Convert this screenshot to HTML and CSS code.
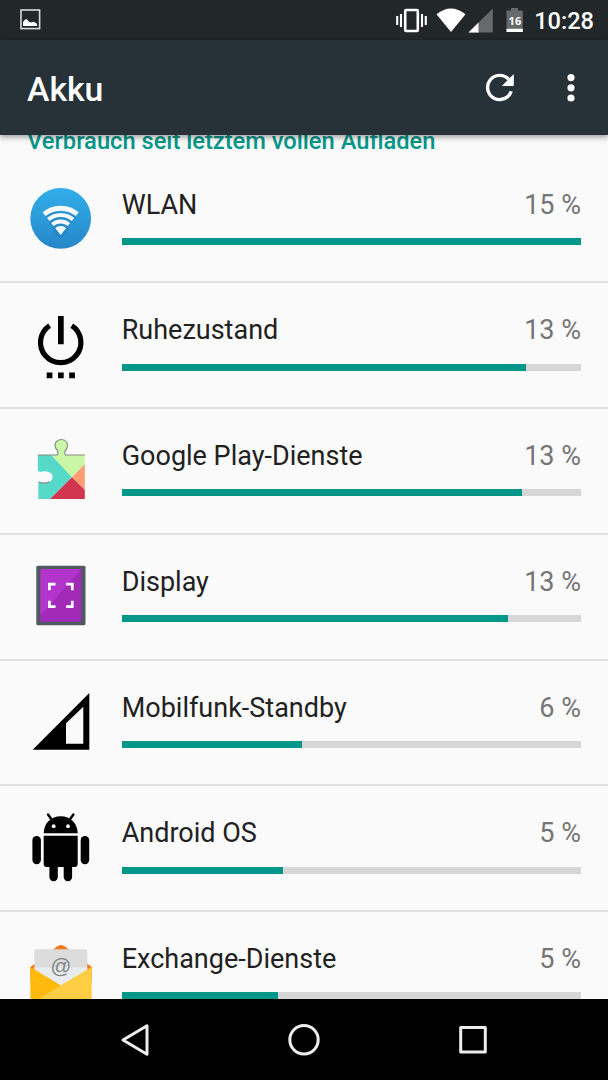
FILE: index.html
```html
<!DOCTYPE html>
<html lang="de">
<head>
  <meta charset="UTF-8" />
  <meta name="viewport" content="width=device-width, initial-scale=1.0">
  <title>Akku</title>
  <link rel="stylesheet" href="styles.css">
</head>
<body>
  <div class="status-bar">
    <svg class="shot" width="22" height="22" viewBox="0 0 22 22">
      <rect x="1" y="1" width="18.6" height="18.6" fill="none" stroke="#d8dadb" stroke-width="1.6"/>
      <path d="M3 17v-4l2-2.2 1.6-.8 2.4 2.8 2 .7 2.3-.8 2 .9 1.7 1.4v2z" fill="#fff"/>
    </svg>
    <svg width="138" height="40" viewBox="0 0 138 40">
      <!-- vibrate -->
      <rect x="9.2" y="10" width="12.6" height="21" rx="1" fill="none" stroke="#fff" stroke-width="2.6"/>
      <path d="M1.2 16v9M5 14v13M26 14v13M29.800 16v9" stroke="#fff" stroke-width="2.1"/>
      <!-- wifi -->
      <path d="M40.500 14.200Q55 2.800 69.500 14.200L55 32z" fill="#fff"/>
      <!-- signal -->
      <path d="M72.500 32.500L96.800 8.500v24z" fill="#67696b"/>
      <path d="M72.500 32.500L82.500 22.600v9.900z" fill="#fff"/>
      <!-- battery -->
      <path d="M110.500 10.500h4.500V8h7v2.500h4.800V32h-16.300z" fill="#67696b"/>
      <path d="M110.500 28.800h16.300V32h-16.300z" fill="#fff"/>
      <text class="level" x="118.900" y="24.600">16</text>
    </svg>
    <span class="clock">10:28</span>
  </div>

  <header class="app-bar">
    <h1>Akku</h1>
    <svg class="refresh" width="30" height="30" viewBox="0 0 30 30">
      <path d="M26.2 18.2A12.1 12.1 0 1 1 23.7 6.4" fill="none" stroke="#fff" stroke-width="3.4"/>
      <path d="M28.8 1v12H16.8z" fill="#fff"/>
    </svg>
    <svg class="more" width="8" height="30" viewBox="0 0 8 30">
      <circle cx="4" cy="4.6" r="3.6" fill="#fff"/>
      <circle cx="4" cy="14.8" r="3.6" fill="#fff"/>
      <circle cx="4" cy="25" r="3.6" fill="#fff"/>
    </svg>
  </header>

  <main>
    <h2>Verbrauch seit letztem vollen Aufladen</h2>

    <div class="row">
      <svg class="icon" viewBox="0 0 66 72">
        <defs>
          <linearGradient id="blue" x1="0" y1="0" x2="0" y2="1">
            <stop offset="0" stop-color="#31aeea"/>
            <stop offset="1" stop-color="#2687c8"/>
          </linearGradient>
          <clipPath id="wedge"><path d="M32.7 52L12.400 26.500V16H53v10.500z"/></clipPath>
        </defs>
        <circle cx="32.7" cy="35.4" r="30.4" fill="url(#blue)"/>
        <path d="M15.5 29L29 53q3.700 3 7.400 0L50 29z" fill="#227fbd" opacity=".55"/>
        <g clip-path="url(#wedge)" fill="none" stroke="#f7fafc">
          <circle cx="32.7" cy="51" r="25.800" stroke-width="5"/>
          <circle cx="32.7" cy="51" r="19" stroke-width="4.200"/>
          <circle cx="32.7" cy="51" r="12.600" stroke-width="4"/>
          <circle cx="32.7" cy="51" r="4" stroke-width="8"/>
        </g>
      </svg>
      <div class="info">
        <div class="line"><span>WLAN</span><span class="percent">15 %</span></div>
        <div class="track"><div class="bar" style="width: 100%"></div></div>
      </div>
    </div>

    <div class="row">
      <svg class="icon" viewBox="0 0 66 72">
        <path d="M21.600 16.600A20.200 20.200 0 1 0 43.8 16.600" fill="none" stroke="#000" stroke-width="5.200"/>
        <path d="M30 7h5.700v28.300H30zM18.700 63.500h5.700v5.800h-5.700zM30 63.500h5.700v5.800H30zM41.200 63.500h5.700v5.800h-5.700z"/>
      </svg>
      <div class="info">
        <div class="line"><span>Ruhezustand</span><span class="percent">13 %</span></div>
        <div class="track"><div class="bar" style="width: 88%"></div></div>
      </div>
    </div>

    <div class="row">
      <svg class="icon" viewBox="0 0 66 72">
        <path d="M9.800 20H24L44 42.200 22 64H10.300V47q8 2.500 11-.3 3.200-1.200 3.200-4.700t-3.200-4.400q-3-2.200-9.500-.6l-2-1.500z" fill="#56d9c9"/>
        <path d="M23 20h6.500q1-2 0-4.500-4-4-1.600-8.500Q30 4.500 33.300 4.500T38.600 7q2.400 4.500-1.300 8.500-1.300 2.500 0 4.500h19.500v9.800L44 42.200z" fill="#c9f7a5"/>
        <path d="M56.800 29.300v25.700L44 42.200z" fill="#ff9e75"/>
        <path d="M44 42.200L56.800 55v9H22z" fill="#d2354f"/>
        <path d="M9.800 20h19.700q1-2 0-4.500-4-4-1.600-8.500Q30 4.500 33.300 4.500T38.600 7q2.400 4.500-1.300 8.500-1.300 2.500 0 4.500h19.500M10.300 47q8 2.500 11-.3" fill="none" stroke="#858d85" stroke-width="1.200"/>
      </svg>
      <div class="info">
        <div class="line"><span>Google Play-Dienste</span><span class="percent">13 %</span></div>
        <div class="track"><div class="bar" style="width: 87.2%"></div></div>
      </div>
    </div>

    <div class="row">
      <svg class="icon" viewBox="0 0 66 72">
        <rect x="8.300" y="5.800" width="49.200" height="59.400" rx="1.500" fill="#505962"/>
        <rect x="12.300" y="9" width="40.800" height="52.600" fill="#b234cd"/>
        <path d="M53.100 9v52.600H12.300V56z" fill="#9c27b0" opacity=".75"/>
        <path d="M21.400 30.200v-6.100h6.100M38.200 24.100h6.100v6.100M44.300 40.700v6h-6.100M27.500 46.700h-6.100v-6" fill="none" stroke="#fff" stroke-width="2.700"/>
      </svg>
      <div class="info">
        <div class="line"><span>Display</span><span class="percent">13 %</span></div>
        <div class="track"><div class="bar" style="width: 84%"></div></div>
      </div>
    </div>

    <div class="row">
      <svg class="icon" viewBox="0 0 66 72">
        <path d="M4.700 63.700L61.300 7v56.700zM38 37.300v20.400h17.300v-37z" fill-rule="evenodd"/>
      </svg>
      <div class="info">
        <div class="line"><span>Mobilfunk-Standby</span><span class="percent">6 %</span></div>
        <div class="track"><div class="bar" style="width: 39.2%"></div></div>
      </div>
    </div>

    <div class="row">
      <svg class="icon" viewBox="0 0 66 72">
        <path d="M15.700 21.200C16 11 23 4.300 32.700 4.300S49.400 11 49.700 21.200z"/>
        <path d="M20 2.500l4 5.500M45.400 2.500l-4 5.500" stroke="#000" stroke-width="2.400" stroke-linecap="round"/>
        <circle cx="25.700" cy="14.200" r="1.900" fill="#fafafa"/>
        <circle cx="40" cy="14.200" r="1.900" fill="#fafafa"/>
        <path d="M15.700 23.700h34V52q0 3-3 3h-28q-3 0-3-3z"/>
        <rect x="4.400" y="24" width="8.500" height="28.300" rx="4.200"/>
        <rect x="52.700" y="24" width="8.500" height="28.300" rx="4.200"/>
        <rect x="21.400" y="48" width="8.400" height="21.300" rx="4.200"/>
        <rect x="35.700" y="48" width="8.400" height="21.300" rx="4.200"/>
      </svg>
      <div class="info">
        <div class="line"><span>Android OS</span><span class="percent">5 %</span></div>
        <div class="track"><div class="bar" style="width: 35.1%"></div></div>
      </div>
    </div>

    <div class="row">
      <svg class="icon" viewBox="0 0 66 72">
        <path d="M2.400 29L29 8.500q4-3 8 0L63.700 29v14H2.400z" fill="#ef7a1a"/>
        <path d="M6.300 13.200q0-2 2-2h49q2 0 2 2V46h-53z" fill="#dcdcdc"/>
        <path d="M6.300 29.500h53V46h-53z" fill="#e9ecee"/>
        <text class="at" x="32.900" y="35">@</text>
        <path d="M2.400 29L33 47.500 20 72H2.400z" fill="#ffb90c"/>
        <path d="M63.700 29v43H2.400v-6.500z" fill="#ffcd43"/>
      </svg>
      <div class="info">
        <div class="line"><span>Exchange-Dienste</span><span class="percent">5 %</span></div>
        <div class="track"><div class="bar" style="width: 34%"></div></div>
      </div>
    </div>
  </main>

  <nav class="nav-bar">
    <svg width="34" height="34" viewBox="0 0 34 34"><path d="M29 2.800v28.400L5 17z"/></svg>
    <svg width="34" height="34" viewBox="0 0 34 34"><circle cx="17" cy="16.800" r="14.200"/></svg>
    <svg width="34" height="34" viewBox="0 0 34 34"><rect x="4.700" y="4.500" width="24.600" height="24.600"/></svg>
  </nav>
</body>
</html>
```
FILE: styles.css
```css
* {
  box-sizing: border-box;
}
body {
  margin: 0;
  height: 100vh;
  display: flex;
  flex-direction: column;
  background: #fafafa;
  font-family: Roboto, sans-serif;
  color: #212121;
  overflow: hidden;
}
svg {
  display: block;
  flex: none;
}
.status-bar {
  flex: none;
  height: 40px;
  padding: 0 14px 0 20px;
  display: flex;
  align-items: center;
  background: #22272a;
  color: #fff;
}
.shot {
  margin-right: auto;
}
.level {
  font-family: "Open Sans", Roboto, sans-serif;
  font-size: 11px;
  font-weight: 700;
  fill: #fff;
  text-anchor: middle;
}
.clock {
  width: 60px;
  padding-top: 2px;
  text-align: right;
  font-size: 23.6px;
  font-weight: 500;
}

.app-bar {
  flex: none;
  position: relative;
  z-index: 1;
  height: 95px;
  padding: 0 33px 0 27px;
  display: flex;
  align-items: center;
  background: #273238;
  box-shadow: 0 2px 6px rgba(0, 0, 0, 0.4);
  color: #fff;
}
h1 {
  margin: 4px auto 0 0;
  font-size: 33.75px;
  font-weight: 500;
}
.refresh {
  margin-right: 52px;
}

main {
  flex: 1;
  min-height: 0;
  overflow: hidden;
}
h2 {
  margin: -8px 0 2.5px;
  padding-left: 27px;
  font-size: 23.7px;
  line-height: 28px;
  font-weight: 500;
  color: #009688;
}
.row {
  height: 125.75px;
  padding: 25.5px 27px 0 28px;
  display: flex;
  border-bottom: 2px solid #dfdfdf;
}
.icon {
  width: 66px;
  height: 72px;
  margin-right: 27.7px;
}
.info {
  flex: 1;
  padding-top: 5.6px;
}
.line {
  display: flex;
  justify-content: space-between;
  font-size: 27px;
  line-height: 32px;
}
.percent {
  color: #757575;
}
.track {
  height: 7px;
  margin-top: 17.2px;
  background: #d6d6d6;
}
.bar {
  height: 100%;
  background: #009688;
}
.at {
  font-family: "Liberation Sans", sans-serif;
  font-size: 20.5px;
  fill: #7f8585;
  text-anchor: middle;
}

.nav-bar {
  flex: none;
  height: 81px;
  display: flex;
  justify-content: center;
  align-items: center;
  gap: 135px;
  background: #000;
}
.nav-bar svg {
  fill: none;
  stroke: #eee;
  stroke-width: 3;
  stroke-linejoin: round;
}
```
